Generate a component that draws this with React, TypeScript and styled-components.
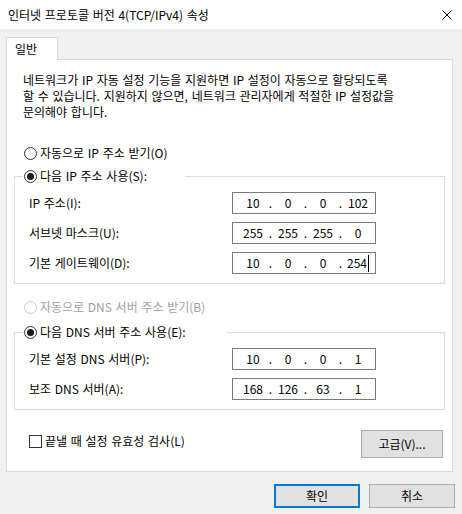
import React from 'react';
import styled, { createGlobalStyle } from 'styled-components';

const GlobalStyle = createGlobalStyle`
  html, body {
    margin: 0;
    padding: 0;
    background: #f0f0f0;
  }
  body {
    font-family: "Noto Sans CJK KR", "Liberation Sans", sans-serif;
    font-size: 12px;
    word-spacing: 1px;
    color: #000;
  }
`;

const Window = styled.div`
  width: 462px;
  height: 514px;
  display: flex;
  flex-direction: column;
  background: #f0f0f0;
  overflow: hidden;
`;

const TitleBar = styled.div`
  height: 29px;
  flex: none;
  background: #fff;
  display: flex;
  align-items: center;
  justify-content: space-between;
  padding: 0 10px 0 8px;
  box-sizing: border-box;
  white-space: nowrap;
`;

const Body = styled.div`
  padding-top: 8px;
  display: flex;
  flex-direction: column;
`;

const TabStrip = styled.div`
  display: flex;
  padding-left: 6px;
`;

const Tab = styled.div`
  width: 52px;
  height: 23px;
  box-sizing: border-box;
  padding: 3px 0 0 8px;
  line-height: 16px;
  background: #fff;
  border: 1px solid #d9d9d9;
  border-bottom: none;
  margin-bottom: -1px;
  position: relative;
  z-index: 1;
`;

const Panel = styled.div`
  margin: 0 9px 0 6px;
  height: 413px;
  box-sizing: border-box;
  background: #fff;
  border: 1px solid #d9d9d9;
  padding: 0 7px;
  display: flex;
  flex-direction: column;
`;

const Intro = styled.p`
  margin: 12px 0 0 9px;
  line-height: 16px;
  white-space: nowrap;
`;

const RadioRow = styled.label<{ $top?: number; $disabled?: boolean }>`
  display: flex;
  align-items: center;
  height: 16px;
  line-height: 16px;
  margin-top: ${(p) => p.$top ?? 0}px;
  padding-left: 10px;
  white-space: nowrap;
  color: ${(p) => (p.$disabled ? '#a0a0a0' : '#000')};
`;

const RadioCircle = styled.span<{ $checked?: boolean; $disabled?: boolean }>`
  width: 13px;
  height: 13px;
  box-sizing: border-box;
  border-radius: 50%;
  border: 1px solid ${(p) => (p.$disabled ? '#cccccc' : '#333333')};
  background: #fff;
  display: flex;
  align-items: center;
  justify-content: center;
  margin-right: 3px;
  flex: none;

  &::after {
    content: '';
    display: ${(p) => (p.$checked ? 'block' : 'none')};
    width: 7px;
    height: 7px;
    border-radius: 50%;
    background: #1a1a1a;
  }
`;

const Group = styled.fieldset<{ $top: number }>`
  margin: ${(p) => p.$top}px 0 0 0;
  padding: 8px 0 9px 0;
  border: 1px solid #dcdcdc;
  min-width: 0;
`;

const Legend = styled.legend<{ $width: number }>`
  margin-left: 8px;
  padding: 0 0 0 1px;
  width: ${(p) => p.$width}px;
  box-sizing: border-box;
  display: flex;
  align-items: center;
  height: 16px;
  line-height: 16px;
  white-space: nowrap;
`;

const Fields = styled.div`
  display: grid;
  grid-template-columns: 203px 144px;
  grid-auto-rows: 22px;
  row-gap: 8px;
  padding-left: 14px;
  align-items: center;
`;

const FieldLabel = styled.span`
  white-space: nowrap;
  line-height: 16px;
`;

const IpBox = styled.div`
  width: 144px;
  height: 22px;
  box-sizing: border-box;
  border: 1px solid #7a7a7a;
  background: #fff;
  display: flex;
  align-items: center;
  padding-left: 6px;
  line-height: 16px;
  word-spacing: 0;
`;

const Octet = styled.span`
  width: 28px;
  text-align: center;
  display: inline-flex;
  justify-content: center;
  align-items: center;
`;

const Dot = styled.span`
  width: 7px;
  text-align: center;
`;

const Caret = styled.span`
  display: inline-block;
  width: 1px;
  height: 17px;
  background: #000;
  margin-left: 1px;
`;

const Footer = styled.div`
  margin-top: 20px;
  display: flex;
  justify-content: space-between;
  align-items: flex-start;
  padding: 0 2px 0 15px;
`;

const CheckRow = styled.label`
  display: flex;
  align-items: center;
  margin-top: 3px;
  height: 16px;
  line-height: 16px;
  white-space: nowrap;
`;

const CheckBox = styled.span`
  width: 13px;
  height: 13px;
  box-sizing: border-box;
  border: 1px solid #333;
  background: #fff;
  margin-right: 3px;
  flex: none;
`;

const Button = styled.button<{ $w: number; $h: number; $default?: boolean }>`
  width: ${(p) => p.$w}px;
  height: ${(p) => p.$h}px;
  box-sizing: border-box;
  background: #e1e1e1;
  border: ${(p) => (p.$default ? '2px solid #0078d7' : '1px solid #adadad')};
  border-radius: 0;
  padding: 0;
  font-family: inherit;
  font-size: 12px;
  color: #000;
  line-height: 16px;
`;

const ButtonRow = styled.div`
  margin-top: 12px;
  display: flex;
  justify-content: flex-end;
  gap: 9px;
  padding-right: 7px;
`;

const CloseIcon = () => (
  <svg width="10" height="10" viewBox="0 0 10 10">
    <path d="M0.5 0.5 L9.5 9.5 M9.5 0.5 L0.5 9.5" stroke="#000" strokeWidth="1" fill="none" />
  </svg>
);

const Ip: React.FC<{ parts: string[]; caret?: boolean }> = ({ parts, caret }) => (
  <IpBox>
    {parts.map((v, i) => (
      <React.Fragment key={i}>
        {i > 0 && <Dot>.</Dot>}
        <Octet>
          {v}
          {caret && i === parts.length - 1 && <Caret />}
        </Octet>
      </React.Fragment>
    ))}
  </IpBox>
);

const App: React.FC = () => {
  return (
    <Window>
      <GlobalStyle />
      <TitleBar>
        <span>인터넷 프로토콜 버전 4(TCP/IPv4) 속성</span>
        <CloseIcon />
      </TitleBar>
      <Body>
        <TabStrip>
          <Tab>일반</Tab>
        </TabStrip>
        <Panel>
          <Intro>
            네트워크가 IP 자동 설정 기능을 지원하면 IP 설정이 자동으로 할당되도록
            <br />
            할 수 있습니다. 지원하지 않으면, 네트워크 관리자에게 적절한 IP 설정값을
            <br />
            문의해야 합니다.
          </Intro>

          <RadioRow $top={25}>
            <RadioCircle />
            자동으로 IP 주소 받기(O)
          </RadioRow>
          <Group $top={7}>
            <Legend $width={162}>
              <RadioCircle $checked />
              다음 IP 주소 사용(S):
            </Legend>
            <Fields>
              <FieldLabel>IP 주소(I):</FieldLabel>
              <Ip parts={['10', '0', '0', '102']} />
              <FieldLabel>서브넷 마스크(U):</FieldLabel>
              <Ip parts={['255', '255', '255', '0']} />
              <FieldLabel>기본 게이트웨이(D):</FieldLabel>
              <Ip parts={['10', '0', '0', '254']} caret />
            </Fields>
          </Group>

          <RadioRow $top={15} $disabled>
            <RadioCircle $disabled />
            자동으로 DNS 서버 주소 받기(B)
          </RadioRow>
          <Group $top={9}>
            <Legend $width={204}>
              <RadioCircle $checked />
              다음 DNS 서버 주소 사용(E):
            </Legend>
            <Fields>
              <FieldLabel>기본 설정 DNS 서버(P):</FieldLabel>
              <Ip parts={['10', '0', '0', '1']} />
              <FieldLabel>보조 DNS 서버(A):</FieldLabel>
              <Ip parts={['168', '126', '63', '1']} />
            </Fields>
          </Group>

          <Footer>
            <CheckRow>
              <CheckBox />
              끝낼 때 설정 유효성 검사(L)
            </CheckRow>
            <Button $w={82} $h={28}>고급(V)...</Button>
          </Footer>
        </Panel>
        <ButtonRow>
          <Button $w={86} $h={24} $default>확인</Button>
          <Button $w={86} $h={24}>취소</Button>
        </ButtonRow>
      </Body>
    </Window>
  );
};

export default App;
